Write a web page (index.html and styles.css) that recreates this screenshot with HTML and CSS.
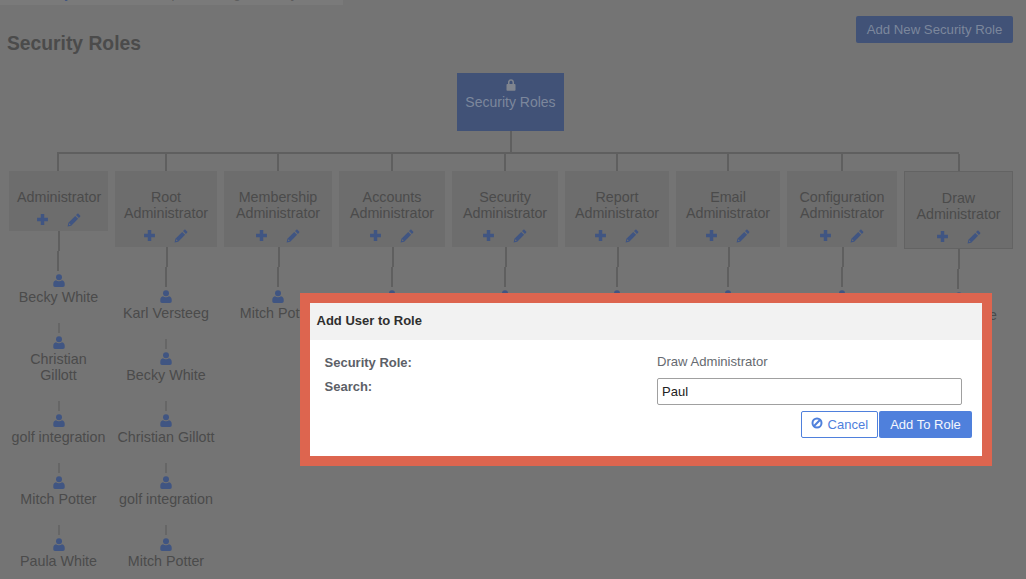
FILE: index.html
```html
<!DOCTYPE html>
<html lang="en">
<head>
<meta charset="utf-8">
<title>Security Roles</title>
<link rel="stylesheet" href="styles.css">
</head>
<body>
<svg class="sprites" width="0" height="0" aria-hidden="true">
  <symbol id="i-plus" viewBox="0 0 12 12"><path d="M4.400 1h3.200v3.400H11v3.200H7.600V11H4.400V7.600H1V4.400h3.400z"/></symbol>
  <symbol id="i-pencil" viewBox="0 0 14 14"><path d="M10.200.9c.4-.4 1-.4 1.400 0l1.500 1.500c.4.4.4 1 0 1.400l-1.200 1.200L9 2.100zM8.200 2.900l2.900 2.900-6.900 6.900-3.600.8.8-3.700zM2.300 10.200l-.4 1.900 1.900-.4z"/></symbol>
  <symbol id="i-user" viewBox="0 0 12 13"><circle cx="6" cy="3.200" r="3"/><path d="M3 6.200c.8.600 1.800 1 3 1s2.200-.4 3-1c1.800.3 2.700 1.600 2.700 3.600v1.400c0 1-.7 1.700-1.700 1.700H2c-1 0-1.700-.7-1.700-1.700V9.800c0-2 .9-3.300 2.700-3.600z"/></symbol>
  <symbol id="i-lock" viewBox="0 0 10 12"><path fill-rule="evenodd" d="M2 5V3.200C2 1.500 3.300.3 5 .3s3 1.200 3 2.900V5h.7c.5 0 .8.300.8.800v5.100c0 .5-.3.800-.8.800H1.300c-.5 0-.8-.3-.8-.8V5.800c0-.5.300-.8.800-.8zm1.500 0h3V3.200C6.500 2.300 5.900 1.700 5 1.700s-1.500.6-1.500 1.500z"/></symbol>
</svg>

<div class="crumb-strip"><span class="crumb-text"><span class="crumb-link">Security</span> Admin Role Setup Roles Log Role Key</span></div>

<header class="page-head">
  <h1 class="page-title">Security Roles</h1>
  <button class="btn-add-role" type="button">Add New Security Role</button>
</header>

<main class="tree">
  <div class="root-node">
    <svg class="icon-lock"><use href="#i-lock"/></svg>
    <span>Security Roles</span>
  </div>
  <div class="stem"></div>
  <div class="rail"></div>
  <div class="roles">
    <section class="role">
      <div class="drop"></div>
      <div class="role-box"><div class="role-name">Administrator</div><div class="role-tools"><svg class="icon-plus"><use href="#i-plus"/></svg><svg class="icon-pencil"><use href="#i-pencil"/></svg></div></div>
      <div class="link-long"></div>
      <div class="member first"><svg class="icon-user"><use href="#i-user"/></svg><div class="member-name">Becky White</div></div>
      <div class="member"><svg class="icon-user"><use href="#i-user"/></svg><div class="member-name">Christian Gillott</div></div>
      <div class="member"><svg class="icon-user"><use href="#i-user"/></svg><div class="member-name">golf integration</div></div>
      <div class="member"><svg class="icon-user"><use href="#i-user"/></svg><div class="member-name">Mitch Potter</div></div>
      <div class="member"><svg class="icon-user"><use href="#i-user"/></svg><div class="member-name">Paula White</div></div>
    </section>
    <section class="role">
      <div class="drop"></div>
      <div class="role-box"><div class="role-name">Root Administrator</div><div class="role-tools"><svg class="icon-plus"><use href="#i-plus"/></svg><svg class="icon-pencil"><use href="#i-pencil"/></svg></div></div>
      <div class="link-long"></div>
      <div class="member first"><svg class="icon-user"><use href="#i-user"/></svg><div class="member-name">Karl Versteeg</div></div>
      <div class="member"><svg class="icon-user"><use href="#i-user"/></svg><div class="member-name">Becky White</div></div>
      <div class="member"><svg class="icon-user"><use href="#i-user"/></svg><div class="member-name">Christian Gillott</div></div>
      <div class="member"><svg class="icon-user"><use href="#i-user"/></svg><div class="member-name">golf integration</div></div>
      <div class="member"><svg class="icon-user"><use href="#i-user"/></svg><div class="member-name">Mitch Potter</div></div>
    </section>
    <section class="role">
      <div class="drop"></div>
      <div class="role-box"><div class="role-name">Membership Administrator</div><div class="role-tools"><svg class="icon-plus"><use href="#i-plus"/></svg><svg class="icon-pencil"><use href="#i-pencil"/></svg></div></div>
      <div class="link-long"></div>
      <div class="member first"><svg class="icon-user"><use href="#i-user"/></svg><div class="member-name">Mitch Potter</div></div>
    </section>
    <section class="role">
      <div class="drop"></div>
      <div class="role-box"><div class="role-name">Accounts Administrator</div><div class="role-tools"><svg class="icon-plus"><use href="#i-plus"/></svg><svg class="icon-pencil"><use href="#i-pencil"/></svg></div></div>
      <div class="link-long"></div>
      <div class="member first"><svg class="icon-user"><use href="#i-user"/></svg></div>
    </section>
    <section class="role">
      <div class="drop"></div>
      <div class="role-box"><div class="role-name">Security Administrator</div><div class="role-tools"><svg class="icon-plus"><use href="#i-plus"/></svg><svg class="icon-pencil"><use href="#i-pencil"/></svg></div></div>
      <div class="link-long"></div>
      <div class="member first"><svg class="icon-user"><use href="#i-user"/></svg></div>
    </section>
    <section class="role">
      <div class="drop"></div>
      <div class="role-box"><div class="role-name">Report Administrator</div><div class="role-tools"><svg class="icon-plus"><use href="#i-plus"/></svg><svg class="icon-pencil"><use href="#i-pencil"/></svg></div></div>
      <div class="link-long"></div>
      <div class="member first"><svg class="icon-user"><use href="#i-user"/></svg></div>
    </section>
    <section class="role">
      <div class="drop"></div>
      <div class="role-box"><div class="role-name">Email Administrator</div><div class="role-tools"><svg class="icon-plus"><use href="#i-plus"/></svg><svg class="icon-pencil"><use href="#i-pencil"/></svg></div></div>
      <div class="link-long"></div>
      <div class="member first"><svg class="icon-user"><use href="#i-user"/></svg></div>
    </section>
    <section class="role">
      <div class="drop"></div>
      <div class="role-box"><div class="role-name">Configuration Administrator</div><div class="role-tools"><svg class="icon-plus"><use href="#i-plus"/></svg><svg class="icon-pencil"><use href="#i-pencil"/></svg></div></div>
      <div class="link-long"></div>
      <div class="member first"><svg class="icon-user"><use href="#i-user"/></svg></div>
    </section>
    <section class="role">
      <div class="drop"></div>
      <div class="role-box role-box-active"><div class="role-name">Draw Administrator</div><div class="role-tools"><svg class="icon-plus"><use href="#i-plus"/></svg><svg class="icon-pencil"><use href="#i-pencil"/></svg></div></div>
      <div class="link-long"></div>
      <div class="member first"><svg class="icon-user"><use href="#i-user"/></svg><div class="member-name">Paula White</div></div>
    </section>
  </div>
</main>

<div class="dialog-frame">
  <div class="dialog">
    <div class="dialog-head">Add User to Role</div>
    <div class="dialog-body">
      <div class="field-row field-row-role">
        <div class="field-label">Security Role:</div>
        <div class="field-value">Draw Administrator</div>
      </div>
      <div class="field-row field-row-search">
        <div class="field-label">Search:</div>
        <input class="field-input" type="text" value="Paul">
      </div>
      <div class="dialog-actions">
        <button class="btn-cancel" type="button">
          <svg class="icon-ban" viewBox="0 0 12 12"><circle cx="6" cy="6" r="4.500"/><path d="M2.800 9.200l6.400-6.400"/></svg>
          Cancel
        </button>
        <button class="btn-primary" type="button">Add To Role</button>
      </div>
    </div>
  </div>
</div>
</body>
</html>
```
FILE: styles.css
```css
* { box-sizing: border-box; }
html, body { margin: 0; height: 100%; overflow: hidden; }
body {
  background: #747474;
  font-family: "Liberation Sans", Arial, sans-serif;
  font-size: 14.3px;
  color: #4b4b4b;
  position: relative;
}
.sprites { position: absolute; }

.crumb-strip {
  width: 343px;
  height: 5px;
  background: #7a7a7a;
  overflow: hidden;
}
.crumb-text {
  display: block;
  margin-top: -14px;
  padding-left: 24px;
  font-size: 13px;
  line-height: 16px;
  color: #5c5c5c;
  white-space: nowrap;
}
.crumb-link { color: #405582; }

.page-head {
  display: flex;
  justify-content: space-between;
  padding: 11px 13px 0 7px;
  height: 68px;
}
.page-title {
  margin: 16px 0 0;
  font-size: 19.300px;
  line-height: 23px;
  font-weight: 700;
  color: #4b4b4b;
}
.btn-add-role {
  width: 157px;
  height: 27px;
  border: 0;
  border-radius: 2px;
  background: #415277;
  color: #7c879c;
  font: 13.200px/27px "Liberation Sans", Arial, sans-serif;
  padding: 0;
}

.tree {
  display: flex;
  flex-direction: column;
  padding: 0 13px 0 9px;
}
.root-node {
  align-self: center;
  width: 107px;
  height: 58px;
  padding-top: 6px;
  margin-left: -1px;
  background: #415277;
  color: #7c879c;
  font-size: 14px;
  display: flex;
  flex-direction: column;
  align-items: center;
  line-height: 16px;
}
.icon-lock { width: 10px; height: 12px; fill: #80858f; margin-bottom: 3px; }
.stem { width: 2px; height: 21px; margin-left: 501px; background: #5f5f5f; }
.rail { width: 902px; height: 2px; margin-left: 48px; background: #5f5f5f; }

.roles {
  display: grid;
  grid-template-columns: 99px 102px 108px 106px 106px 104px 104px 110px 109px;
  column-gap: 7px;
  align-items: start;
}
.role { display: flex; flex-direction: column; align-items: center; }
.drop { width: 2px; height: 17px; background: #5f5f5f; }
.role:first-child .drop { margin-right: 1px; }
.role-box {
  width: 100%;
  padding: 18px 0 6px;
  background: #6d6d6d;
  text-align: center;
  line-height: 16px;
}
.role-box-active { border: 1px solid #636363; }
.role-name { padding: 0 8px; }
.role-tools {
  display: flex;
  justify-content: center;
  gap: 18px;
  height: 12px;
  margin-top: 8px;
  padding-right: 1px;
}
.icon-plus { width: 13px; height: 13px; fill: #405582; }
.icon-pencil { width: 14px; height: 14px; fill: #405582; }

.link-long {
  width: 2px;
  height: 20px;
  background: #5f5f5f;
  margin-left: 1px;
  box-shadow: -1px 20px 0 #5f5f5f;
}

.member {
  display: flex;
  flex-direction: column;
  align-items: center;
  width: 100%;
  padding: 18px 0 0;
  text-align: center;
  line-height: 16px;
}
.member::before {
  content: "";
  width: 2px;
  height: 10px;
  background: #666;
  margin-bottom: 3px;
}
.member.first { padding-top: 23px; }
.member.first::before { display: none; }
.icon-user { width: 12px; height: 13px; fill: #405582; margin-bottom: 2px; }
.member-name { padding: 0 2px; }

.dialog-frame {
  position: absolute;
  left: 300px;
  top: 293px;
  width: 692px;
  height: 173px;
  border: 10px solid #dd654f;
  background: #fff;
}
.dialog-head {
  height: 37px;
  padding-left: 6.500px;
  background: #f2f2f2;
  color: #2f2f2f;
  font-size: 13px;
  font-weight: 700;
  line-height: 36px;
}
.dialog-body { padding: 14px 10px 0 14.500px; font-size: 13px; }
.field-row { display: flex; line-height: 16px; }
.field-row-role { height: 16px; }
.field-row-search { margin-top: 8px; }
.field-label { width: 332.500px; padding-top: 1px; font-weight: 700; color: #5c6067; }
.field-value { font-size: 13.100px; color: #666a70; }
.field-input {
  width: 305px;
  height: 27px;
  padding: 0 4px;
  border: 1px solid #a0a0a0;
  border-radius: 2px;
  font: 13px "Liberation Sans", Arial, sans-serif;
  color: #222;
  background: #fff;
}
.dialog-actions {
  display: flex;
  justify-content: flex-end;
  gap: 1px;
  margin-top: 6px;
}
.btn-cancel, .btn-primary {
  height: 27px;
  border-radius: 2px;
  font: 13px "Liberation Sans", Arial, sans-serif;
  padding: 0;
}
.btn-cancel {
  width: 77px;
  border: 1px solid #4f80dc;
  background: #fff;
  color: #4f80dc;
}
.btn-primary {
  width: 93px;
  border: 0;
  background: #4f80dc;
  color: #f4f7fd;
}
.icon-ban {
  width: 12px;
  height: 12px;
  fill: none;
  stroke: #4f80dc;
  stroke-width: 2;
  vertical-align: 0;
  margin-right: 1px;
}
```
